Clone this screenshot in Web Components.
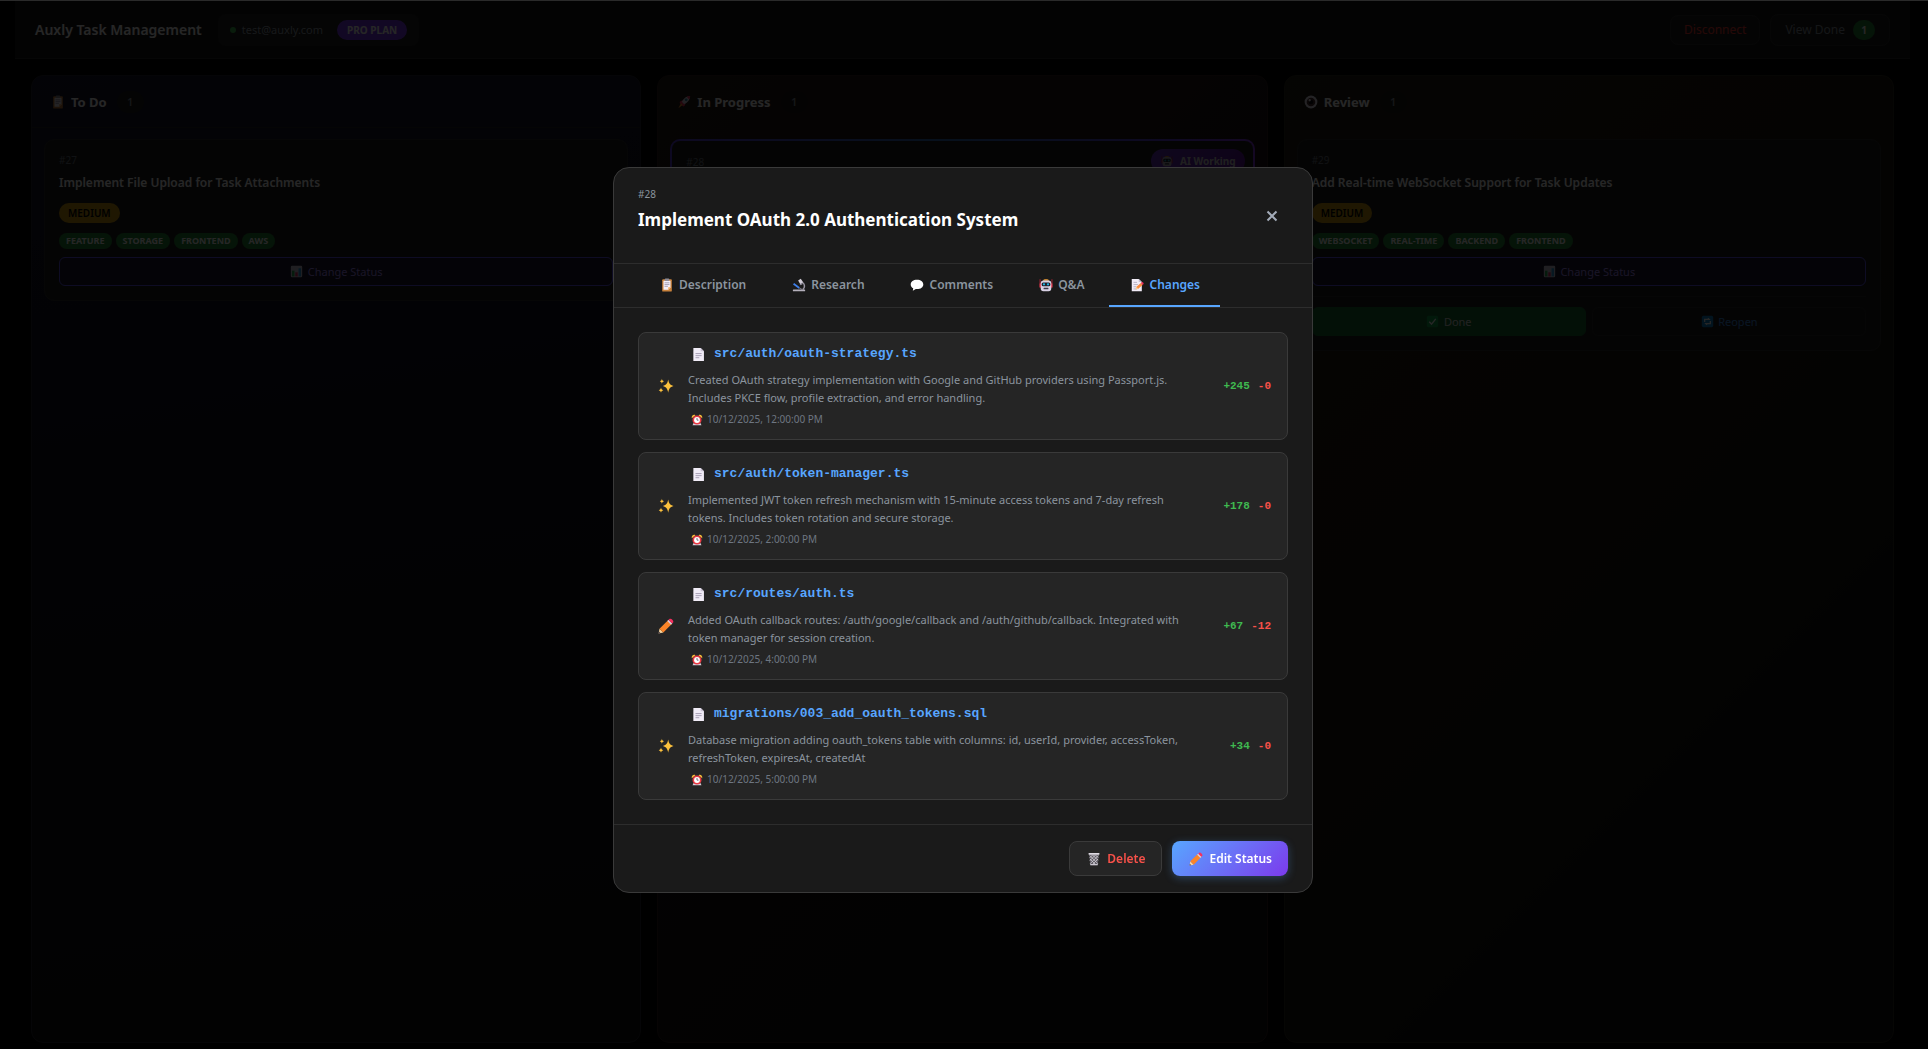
<!DOCTYPE html>
<html lang="en">
<head>
<meta charset="utf-8">
<title>Auxly Task Management</title>
<style>
  html, body { margin: 0; background: #000; }
  body { font-family: "Noto Sans", "Open Sans", sans-serif; color: #fff; font-size: 12px; }
</style>
</head>
<body>
<auxly-app></auxly-app>
<script>
const define = (name, render, setup) => customElements.define(name, class extends HTMLElement {
  connectedCallback() {
    if (this.shadowRoot) return;
    const t = document.createElement('template');
    t.innerHTML = '<style>*{box-sizing:border-box}button{font:inherit;margin:0;cursor:pointer}</style>' + render(this);
    this.attachShadow({ mode: 'open' }).append(t.content.cloneNode(true));
    if (setup) setup(this.shadowRoot, this);
  }
});

const ICONS = {
  clipboard: '<rect x="2.5" y="1.5" width="11" height="14" rx="1" fill="#c9823c"/><path d="M4 3h8v7.5L9.500 13.500H4z" fill="#f3eef8"/><path d="M12 10.500 9.500 13.500v-3z" fill="#f9a94b"/><rect x="5.500" y=".5" width="5" height="2.800" rx=".8" fill="#8d8b96"/><path d="M5.200 5.500h5.600M5.200 7.500h5.600M5.200 9.500h3.800" stroke="#9e98ad"/>',
  microscope: '<path d="M7 2.800 10 .8l3 4.400-3.400 2.200z" fill="#d3ced9"/><path d="m8.800 7 2.400-1.500.8 1.500-2.200 1.300z" fill="#8d8996"/><path d="M12 5.200c3 1.600 3 6 .2 8" fill="none" stroke="#9a96a3" stroke-width="1.700"/><path d="m1.800 6.500 6.500 5" stroke="#3f7fe8" stroke-width="2"/><path d="m8.500 11.500 3 1.500" stroke="#77737f" stroke-width="1.200"/><rect x="1" y="13" width="14" height="2.200" rx=".7" fill="#b4b0bb"/>',
  speech: '<path d="M8 2C3.800 2 .8 4.200.8 7.300c0 1.900 1.100 3.500 2.900 4.400L3.200 14.500l3.500-2c.4.1.8.1 1.300.1 4.200 0 7.200-2.200 7.200-5.300S12.200 2 8 2z" fill="#fff"/>',
  robot: '<path d="M4.500 3C5 .8 11 .8 11.500 3z" fill="#f5a53b"/><path d="M.7 1.500h1v5h-1zM14.300 1.500h1v5h-1z" fill="#b8283a"/><rect x=".5" y="6" width="2" height="5" rx=".8" fill="#e5364b"/><rect x="13.500" y="6" width="2" height="5" rx=".8" fill="#e5364b"/><rect x="2" y="2.800" width="12" height="12.200" rx="3" fill="#d8d1e4"/><rect x="3" y="5" width="10" height="4.400" rx="1.800" fill="#21202b"/><circle cx="5.700" cy="7.200" r="1.300" fill="#22b8e8"/><circle cx="10.300" cy="7.200" r="1.300" fill="#22b8e8"/><rect x="5.200" y="11" width="5.600" height="1.800" rx=".6" fill="#3b3847"/>',
  memo: '<path d="M2 1h8l3.500 3.500V15H2z" fill="#f1ecf7"/><path d="M10 1v3.500h3.500z" fill="#c3bbcf"/><path d="M4 5h4M4 7.500h5M4 10h3M4 12.500h3" stroke="#aba3b8" stroke-width=".9"/><path d="m6.500 13 .9-2.900 5-4.400 2 2.200-5 4.400z" fill="#fb8a3c"/><path d="m6.500 13 .9-2.900 2 2.200z" fill="#f6d19a"/><path d="m12.400 5.700 1-.9c.9-.6 2.700 1.200 2 2.100l-1 1z" fill="#f0305f"/>',
  page: '<path d="M2.500 1h7.800L13.800 4.500V15H2.500z" fill="#f1ecf7"/><path d="M10.300 1v3.500h3.500z" fill="#cbc3d6"/><path d="M4.800 7h6.500M4.800 9.200h6.500M4.800 11.400h4" stroke="#a39cb2"/>',
  sparkles: '<path d="M10.200 1.500c.7 3.900 1.700 5.300 5.300 6.500-3.600 1.200-4.600 2.700-5.300 6.700C9.500 10.700 8.400 9.200 4.900 8c3.500-1.200 4.600-2.600 5.300-6.500zM3.900.8c.3 1.500.7 2 2.100 2.500-1.400.5-1.800 1-2.100 2.500C3.600 4.300 3.200 3.800 1.800 3.300 3.200 2.800 3.600 2.300 3.900.8zM3 9.600c.3 1.600.8 2.100 2.300 2.600-1.500.5-2 1-2.300 2.600-.3-1.600-.8-2.100-2.300-2.600C2.200 11.700 2.700 11.200 3 9.600z" fill="#fcc13d"/>',
  pencil: '<path d="m.6 15.400.9-4.700 3.800 3.800z" fill="#f7d59e"/><path d="m1.500 10.700 8.800-8.600 3.700 3.700-8.700 8.700z" fill="#fb8428"/><path d="m9.300 3.100 1.300-1.300 3.700 3.700L13 6.800z" fill="#d7d0df"/><path d="m10.500 1.900.9-.9c1.600-1.400 5 2 3.600 3.600l-.9.900z" fill="#f5305f"/><path d="m.6 15.400.4-1.900 1.500 1.500z" fill="#493c4b"/>',
  alarm: '<path d="M1 5.500C.5 2.500 3 .3 6 1.500zM15 5.500c.5-3-2-5.200-5-4z" fill="#f9bf3b"/><path d="m3.500 12-1.500 3h12l-1.500-3z" fill="#d5cfdb"/><circle cx="8" cy="8" r="6" fill="#ea3b45"/><circle cx="8" cy="8" r="3.900" fill="#fff"/><path d="M8 5.300V8.200h2" fill="none" stroke="#5a5363" stroke-width="1.100"/>',
  bin: '<path d="M2.500 2.500h11L12.300 15H3.700z" fill="#5f5b64"/><path d="m3.200 4 9.300 9.500M6.500 3.500l6 6M9.800 3.500l3 3M3.500 8l6.500 6.500M12.800 4 3.500 13.500M9.500 3.500 3.200 10M6.200 3.500 3 6.800M12.500 8 6 14.500" stroke="#d4d1d8" stroke-width=".9"/><rect x="1.700" y="1" width="12.600" height="2" rx=".7" fill="#dedae2"/><rect x="3.600" y="13.800" width="8.800" height="1.400" rx=".5" fill="#c9c5ce"/>',
  rocket: '<path d="M3.500 7.500 6.500 6 10 9.500 8.500 12.500 7 13 3 9z" fill="#f5305f"/><path d="M15 1c-4 0-7.500 2.500-9.500 6.800l2.700 2.700C12.500 8.500 15 5 15 1z" fill="#e2dbea"/><path d="M15 1c-1.500 0-2.800.3-4 .9l3.100 3.100c.6-1.200.9-2.500.9-4z" fill="#f5305f"/><circle cx="10.500" cy="5.500" r="1.600" fill="#39849e"/><path d="m4.500 9.500 2 2L1.500 15z" fill="#f79a2f"/>',
  eye: '<circle cx="8" cy="8" r="7.300" fill="#eeeaf4"/><circle cx="8" cy="8" r="4.900" fill="#4c3033"/><circle cx="8" cy="8" r="2.700" fill="#0c0a0e"/><circle cx="6.500" cy="6" r="1.300" fill="#fff"/>',
  chart: '<rect x="1" y="1" width="14" height="14" rx="1.500" fill="#d8d2e0"/><path d="M2.500 7h3v7h-3z" fill="#26b556"/><path d="M6.500 9h3v5h-3z" fill="#e5326a"/><path d="M10.500 4h3v10h-3z" fill="#2f9fe0"/>',
  check: '<rect x="1" y="1" width="14" height="14" rx="2" fill="#12a64c"/><path d="m4 8.300 2.800 2.900L12 4.800" fill="none" stroke="#fff" stroke-width="1.700"/>',
  cycle: '<rect x="1" y="1" width="14" height="14" rx="2" fill="#1187cf"/><path d="M4.500 8.500V5.500h5.500L8.500 4M11.500 7.500v3H6l1.500 1.500" fill="none" stroke="#fff" stroke-width="1.600"/>'
};

define('ui-icon', el => `
  <style>:host{display:inline-flex;flex:none;align-items:center;justify-content:center;width:var(--box,14px)}
  svg{display:block;flex:none;width:var(--glyph,14px);height:var(--glyph,14px)}</style>
  <svg viewBox="0 0 16 16" aria-hidden="true">${ICONS[el.getAttribute('name')]}</svg>`);

define('app-header', () => `
  <style>
    :host{display:flex;align-items:center;justify-content:space-between;height:58px;padding:0 20px;background:#1a1a1a;border-bottom:1px solid #2d2d2d}
    .side{display:flex;align-items:center}
    .left{gap:16px}.right{gap:10px}
    h1{margin:0;font-size:14px;font-weight:600}
    .user{display:flex;align-items:center;height:32px;padding:0 12px;background:#222;border-radius:8px;color:#9aa3ad;font-size:11px}
    .dot{width:6px;height:6px;border-radius:50%;background:#3fb950;margin-right:6px}
    .plan{margin-left:14px;padding:0 10px;border-radius:10px;background:#7c3aed;color:#fff;font-size:10px;font-weight:700;line-height:20px}
    button{display:flex;align-items:center;gap:8px;padding:0 14px;height:32px;border:1px solid #2d2d2d;border-radius:8px;background:#202020;color:#8b949e;font-size:12px}
    .danger{height:30px;padding:0 13px;color:#f83b32}
    .n{min-width:22px;line-height:20px;border-radius:10px;background:#238636;color:#fff;font-size:10px;font-weight:700}
  </style>
  <div class="side left"><h1>Auxly Task Management</h1>
    <div class="user"><span class="dot"></span><span>test@auxly.com</span><span class="plan">PRO PLAN</span></div></div>
  <div class="side right"><button class="danger">Disconnect</button><button>View Done <span class="n">1</span></button></div>`);

define('board-column', el => `
  <style>
    :host{display:flex;flex-direction:column;flex:1 1 0;min-width:0;border:1px solid var(--edge,#2c2c2c);border-radius:12px;background:var(--fill,#111);overflow:hidden}
    header{display:flex;align-items:center;height:52px;padding:0 19px;border-bottom:1px solid var(--line,#222);--box:14px}
    h2{margin:0 10px 0 6px;font-size:13px;font-weight:700}
    .n{min-width:27px;line-height:22px;border-radius:11px;background:var(--pill,#1d1d1d);color:#8b949e;font-size:11px;font-weight:600;text-align:center}
    .list{padding:11px 12px}
  </style>
  <header><ui-icon name="${el.getAttribute('icon')}"></ui-icon><h2>${el.getAttribute('heading')}</h2><span class="n">1</span></header>
  <div class="list"><slot></slot></div>`);

define('task-card', el => `
  <style>
    :host{display:block;padding:14px;border:1px solid #2d2d2d;border-radius:10px;background:#202020}
    .id{color:#6e7681;font-size:10px;line-height:12px}
    h3{margin:7px 0 10px;font-size:12px;line-height:20px;font-weight:600}
    .prio{display:block;width:fit-content;padding:0 9px;border-radius:10px;background:#d29912;color:#000;font-size:10px;line-height:20px;font-weight:600}
    .tags{display:flex;gap:4px;margin:10px 0 8px}
    .tags span{padding:0 7px;border-radius:8px;background:#238636;font-size:9px;line-height:16px;font-weight:700}
    button{display:flex;flex:1;align-items:center;justify-content:center;gap:4px;width:100%;height:29px;padding:0;border:1px solid #6255f0;border-radius:6px;background:#1c1830;color:#a78bfa;font-size:11px;--glyph:13px}
    .actions{display:flex;gap:6px;margin-top:10px;padding-top:10px;border-top:1px solid #2d2d2d}
    .done{background:#166b30;border-color:#166b30;color:#e0e0e0}
    .reopen{background:none;border-color:#282828;color:#3f8fe8}
  </style>
  <div class="id">${el.getAttribute('number')}</div>
  <h3>${el.getAttribute('heading')}</h3>
  <span class="prio">MEDIUM</span>
  <div class="tags">${el.getAttribute('tags').split(',').map(t => `<span>${t}</span>`).join('')}</div>
  <button><ui-icon name="chart"></ui-icon>Change Status</button>
  ${el.hasAttribute('review') ? '<div class="actions"><button class="done"><ui-icon name="check"></ui-icon>Done</button><button class="reopen"><ui-icon name="cycle"></ui-icon>Reopen</button></div>' : ''}`);

define('working-card', () => `
  <style>
    :host{display:block;position:relative;min-height:160px;padding:15px 14px;border:2px solid transparent;border-radius:10px;
      background:linear-gradient(#202020,#202020) padding-box,linear-gradient(100deg,#5b3fe0,#2f6fb8 45%,#5b3fe0 80%,#9333ea) border-box}
    .id{color:#6e7681;font-size:10px;line-height:12px}
    .ai{position:absolute;top:8px;right:8px;display:flex;align-items:center;gap:6px;padding:0 9px;border-radius:12px;background:linear-gradient(135deg,#7c3aed,#6a0fb8);font-size:10px;line-height:24px;font-weight:700;opacity:.8;--glyph:12px}
  </style>
  <div class="id">#28</div><div class="ai"><ui-icon name="robot"></ui-icon>AI Working</div>`);

define('task-board', () => `
  <style>
    :host{display:flex;flex:1;gap:16px;padding:16px}
    .todo{--fill:linear-gradient(170deg,#16162e,#10101c 45%,#101010);--edge:#26262e}
    .prog{--fill:linear-gradient(135deg,#241c14,#26161a 25%,#141012 60%,#101010);--edge:#2e1f1e;--line:transparent;--pill:#1f1819}
    .rev{--fill:linear-gradient(135deg,#24211a,#20180e 35%,#161610 65%,#101010 72%);--edge:#2c291c;--line:transparent;--pill:#20201a}
  </style>
  <board-column class="todo" icon="clipboard" heading="To Do"><task-card number="#27" heading="Implement File Upload for Task Attachments" tags="FEATURE,STORAGE,FRONTEND,AWS"></task-card></board-column>
  <board-column class="prog" icon="rocket" heading="In Progress"><working-card></working-card></board-column>
  <board-column class="rev" icon="eye" heading="Review"><task-card review number="#29" heading="Add Real-time WebSocket Support for Task Updates" tags="WEBSOCKET,REAL-TIME,BACKEND,FRONTEND"></task-card></board-column>`);

define('change-item', el => `
  <style>
    :host{display:flex;align-items:center;gap:12px;padding:12px 16px;border:1px solid #3a3a3a;border-radius:8px;background:#252525}
    .kind{--box:21px;--glyph:16px}
    .main{flex:1;min-width:0}
    .path{display:flex;align-items:center;gap:6px;height:20px;padding-bottom:2px;margin-bottom:6px;color:#58a6ff;font:700 13px/16px "Liberation Mono",monospace;--box:20px;--glyph:15px}
    p{margin:0 0 5px;color:#8b949e;font-size:11px;line-height:18px}
    .time{display:flex;align-items:center;gap:2px;color:#6e7681;font-size:10px;line-height:15px;--box:17px;--glyph:12px}
    .stats{display:flex;gap:8px;margin-left:14px;font:700 11px/14px "Liberation Mono",monospace}
    .add{color:#3fb950}.del{color:#f85149}
  </style>
  <ui-icon class="kind" name="${el.getAttribute('kind')}"></ui-icon>
  <div class="main">
    <div class="path"><ui-icon name="page"></ui-icon><span>${el.getAttribute('path')}</span></div>
    <p><slot></slot></p>
    <div class="time"><ui-icon name="alarm"></ui-icon><span>${el.getAttribute('time')}</span></div>
  </div>
  <div class="stats"><span class="add">${el.getAttribute('add')}</span><span class="del">${el.getAttribute('del')}</span></div>`);

define('modal-tabs', () => `
  <style>
    :host{display:flex;gap:4px;padding:0 24px;border-bottom:1px solid #2d2d2d}
    button{display:flex;align-items:center;gap:4px;height:43px;padding:0 20px;border:0;border-bottom:2px solid transparent;background:none;color:#8b949e;font-size:12px;font-weight:600;--box:17px}
    button[aria-selected=true]{color:#58a6ff;border-bottom-color:#58a6ff}
  </style>
  ${[['clipboard', 'Description'], ['microscope', 'Research'], ['speech', 'Comments'], ['robot', 'Q&amp;A'], ['memo', 'Changes']].map(([i, t]) =>
    `<button role="tab" aria-selected="${t === 'Changes'}"><ui-icon name="${i}"></ui-icon>${t}</button>`).join('')}`,
  (root, el) => {
    el.setAttribute('role', 'tablist');
    const tabs = root.querySelectorAll('button');
    tabs.forEach(b => b.onclick = () => tabs.forEach(o => o.setAttribute('aria-selected', o === b)));
  });

define('task-modal', () => `
  <style>
    :host{display:block;width:700px;max-width:100%;border:1px solid #3a3a3a;border-radius:16px;background:#1a1a1a}
    header{display:flex;align-items:center;justify-content:space-between;padding:20px 24px;border-bottom:1px solid #2d2d2d}
    .head{padding-bottom:9px}
    .id{color:#8b949e;font-size:10px;line-height:12px;margin-bottom:6px}
    h2{margin:0;font-size:17px;line-height:28px;font-weight:700}
    .close{display:flex;align-items:center;justify-content:center;width:32px;height:32px;padding:0;border:0;background:none;color:#a3abb8}
    .list{display:flex;flex-direction:column;gap:12px;padding:24px}
    footer{display:flex;justify-content:flex-end;gap:10px;padding:16px 24px;border-top:1px solid #2d2d2d}
    footer button{display:flex;align-items:center;gap:5px;height:35px;padding:0 16px;border:1px solid #3a3a3a;border-radius:8px;background:#252525;color:#f85149;font-size:12px;font-weight:600;--box:16px;--glyph:14px}
    footer .primary{border:0;background:linear-gradient(135deg,#58a6ff,#7c3aed);color:#fff;box-shadow:0 2px 8px rgba(88,166,255,.3)}
  </style>
  <header><div class="head"><div class="id">#28</div><h2>Implement OAuth 2.0 Authentication System</h2></div>
    <button class="close" aria-label="Close"><svg width="12" height="12" viewBox="0 0 12 12"><path d="m1.500 1.500 9 9m0-9-9 9" stroke="currentColor" stroke-width="2"/></svg></button></header>
  <modal-tabs></modal-tabs>
  <div class="list">
    <change-item kind="sparkles" path="src/auth/oauth-strategy.ts" time="10/12/2025, 12:00:00 PM" add="+245" del="-0">Created OAuth strategy implementation with Google and GitHub providers using Passport.js. Includes PKCE flow, profile extraction, and error handling.</change-item>
    <change-item kind="sparkles" path="src/auth/token-manager.ts" time="10/12/2025, 2:00:00 PM" add="+178" del="-0">Implemented JWT token refresh mechanism with 15-minute access tokens and 7-day refresh tokens. Includes token rotation and secure storage.</change-item>
    <change-item kind="pencil" path="src/routes/auth.ts" time="10/12/2025, 4:00:00 PM" add="+67" del="-12">Added OAuth callback routes: /auth/google/callback and /auth/github/callback. Integrated with token manager for session creation.</change-item>
    <change-item kind="sparkles" path="migrations/003_add_oauth_tokens.sql" time="10/12/2025, 5:00:00 PM" add="+34" del="-0">Database migration adding oauth_tokens table with columns: id, userId, provider, accessToken, refreshToken, expiresAt, createdAt</change-item>
  </div>
  <footer><button><ui-icon name="bin"></ui-icon>Delete</button><button class="primary"><ui-icon name="pencil"></ui-icon>Edit Status</button></footer>`);

define('auxly-app', () => `
  <style>
    :host{display:block}
    .page{display:flex;flex-direction:column;box-sizing:border-box;min-height:100vh;padding:1px 18px 0 15px}
    task-board{padding-bottom:6px}
    .overlay{position:fixed;inset:0;display:flex;align-items:center;justify-content:center;padding:10px 2px 0 0;border-top:1px solid #2a2a2a;background:rgba(0,0,0,.85)}
  </style>
  <div class="page"><app-header></app-header><task-board></task-board></div>
  <div class="overlay"><task-modal role="dialog" aria-modal="true"></task-modal></div>`);
</script>
</body>
</html>
